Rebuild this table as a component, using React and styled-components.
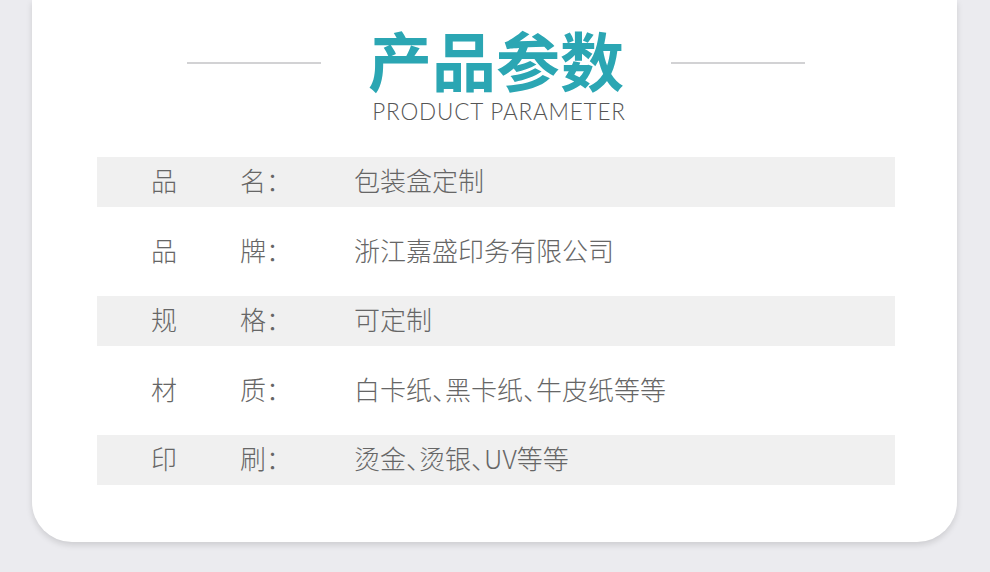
import React from 'react'
import styled, { createGlobalStyle } from 'styled-components'

const GlobalStyle = createGlobalStyle`
  html, body {
    margin: 0;
    padding: 0;
    background: #ebebef;
  }
  body {
    font-family: "Noto Sans CJK SC", "Noto Sans", sans-serif;
  }
`

const Page = styled.div`
  width: 990px;
  height: 572px;
  padding: 0 33px 0 32px;
  box-sizing: border-box;
  overflow: hidden;
`

const Card = styled.div`
  background: #fff;
  height: 542px;
  border-radius: 0 0 40px 40px;
  box-shadow: 0 3px 6px rgba(0, 0, 0, 0.13);
  padding: 20px 62px 0 65px;
  box-sizing: border-box;
`

const Heading = styled.div`
  display: flex;
  justify-content: center;
  align-items: center;
  gap: 47px;
  height: 76px;
`

const Rule = styled.div`
  width: 134px;
  height: 2px;
  background: #d2d2d4;
  margin-top: 10px;
`

const Title = styled.h1`
  margin: 0;
  font-family: "Noto Sans CJK SC", sans-serif;
  font-weight: 700;
  font-size: 64px;
  line-height: 64px;
  color: #2ba6b3;
`

const Subtitle = styled.div`
  text-align: center;
  font-family: Lato, "Open Sans", sans-serif;
  font-weight: 300;
  font-size: 22.5px;
  line-height: 28px;
  letter-spacing: 0.8px;
  color: #555;
  margin-top: 2px;
  padding-left: 6px;
`

const Table = styled.div`
  margin-top: 31px;
  display: flex;
  flex-direction: column;
  gap: 19.5px;
`

const Row = styled.div`
  height: 50px;
  display: flex;
  align-items: center;
  padding-bottom: 5px;
  box-sizing: border-box;
  background: ${({ $shaded }) => ($shaded ? '#f0f0f0' : 'transparent')};
  font-size: 26px;
  font-weight: 300;
  color: #666;
`

const Key = styled.span`
  width: ${({ $w }) => $w}px;
  flex-shrink: 0;
`

const Value = styled.span`
  white-space: nowrap;
`

const Comma = styled.span`
  font-feature-settings: "halt";
`

const rows = [
  ['品', '名：', '包装盒定制'],
  ['品', '牌：', '浙江嘉盛印务有限公司'],
  ['规', '格：', '可定制'],
  ['材', '质：', '白卡纸、黑卡纸、牛皮纸等等'],
  ['印', '刷：', '烫金、烫银、UV等等'],
]

const renderValue = (v) =>
  v.split('、').map((part, i, arr) => (
    <React.Fragment key={i}>
      {part}
      {i < arr.length - 1 && <Comma>、</Comma>}
    </React.Fragment>
  ))

export default function App() {
  return (
    <>
      <GlobalStyle />
      <Page>
        <Card>
          <Heading>
            <Rule />
            <Title>产品参数</Title>
            <Rule />
          </Heading>
          <Subtitle>PRODUCT PARAMETER</Subtitle>
          <Table>
            {rows.map(([a, b, v], i) => (
              <Row key={i} $shaded={i % 2 === 0}>
                <Key $w={54} />
                <Key $w={89}>{a}</Key>
                <Key $w={114}>{b}</Key>
                <Value>{renderValue(v)}</Value>
              </Row>
            ))}
          </Table>
        </Card>
      </Page>
    </>
  )
}
